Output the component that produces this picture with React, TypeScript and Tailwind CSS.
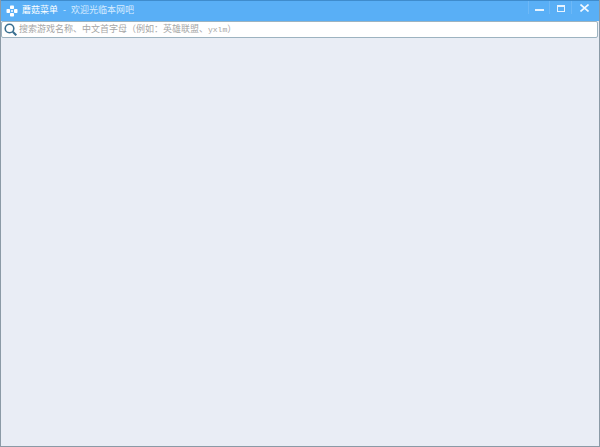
import React from "react";

function Logo() {
  return (
    <svg width="12" height="12" viewBox="0 0 12 12" fill="#ffffff">
      <rect x="4" y="0.5" width="4" height="3.5" rx="0.8" />
      <rect x="0.5" y="4" width="3.5" height="4" rx="0.8" />
      <rect x="8" y="4" width="3.5" height="4" rx="0.8" />
      <rect x="4" y="8" width="4" height="3.5" rx="0.8" />
      <rect x="5" y="5" width="2" height="2" fill="#d5ebff" />
    </svg>
  );
}

function SearchIcon() {
  return (
    <svg width="13" height="13" viewBox="0 0 13 13" fill="none" stroke="#3a6f90">
      <circle cx="5.5" cy="5.5" r="4.3" strokeWidth="1.6" />
      <path d="M8.8 8.8L12.3 12.3" strokeWidth="2.1" />
    </svg>
  );
}

export default function App() {
  return (
    <div className="w-[600px] h-[447px] flex flex-col bg-[#e9edf5] border border-t-0 border-[#8b9aa6] overflow-hidden font-['Liberation_Sans','Noto_Sans_CJK_SC',sans-serif]">
      <div className="h-[21px] shrink-0 flex items-center bg-[#59aff6] border-t border-[#3f8ccd] text-white text-[9px]">
        <div className="ml-[5px] mr-[4px]">
          <Logo />
        </div>
        <span>蘑菇菜单</span>
        <span className="ml-[5px] text-[#d5ebff]">-</span>
        <span className="ml-[5px] text-[#d5ebff]">欢迎光临本网吧</span>
        <div className="ml-auto flex self-start h-[13px]">
          <div className="w-[21px] flex justify-center border-l border-[#6db8f7]">
            <div className="w-[9px] h-[2px] bg-[#e6f3fe] mt-[8px]" />
          </div>
          <div className="w-[22px] flex justify-center border-l border-[#6db8f7]">
            <div className="w-[8px] h-[7px] mt-[4px] border border-t-2 border-[#e6f3fe]" />
          </div>
          <div className="w-[28px] flex justify-center border-l border-[#6db8f7] pt-[3px] pr-[2px]">
            <svg width="9" height="8" viewBox="0 0 9 8" stroke="#f2f8ff" strokeWidth="1.6">
              <path d="M0.5 0.5L8.5 7.5M8.5 0.5L0.5 7.5" />
            </svg>
          </div>
        </div>
      </div>
      <div className="h-[17px] shrink-0 flex items-center bg-white border border-[#9db3c0] rounded-[2px] mr-[1px]">
        <div className="ml-[2px] mr-[2px]">
          <SearchIcon />
        </div>
        <span className="text-[9px] text-[#a6a6a6]">
          搜索游戏名称、中文首字母（例如：英雄联盟、
          <span className="font-['Liberation_Mono',monospace] text-[8px]">yxlm</span>）
        </span>
      </div>
    </div>
  );
}
